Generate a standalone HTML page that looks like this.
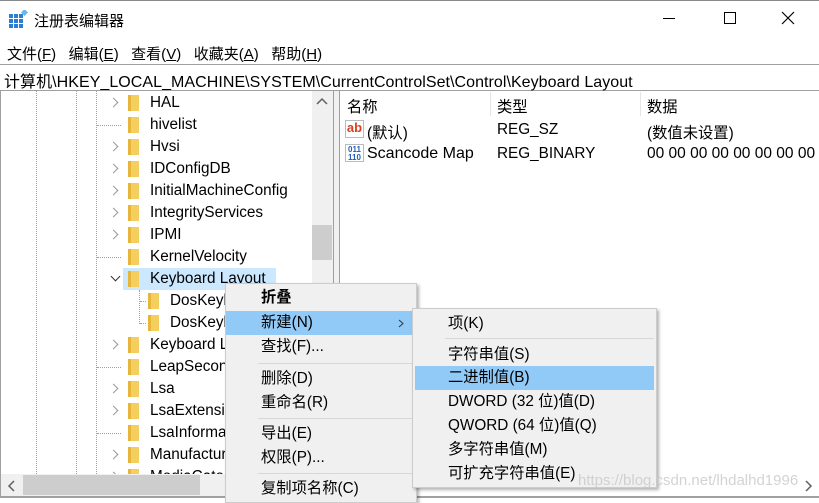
<!DOCTYPE html>
<html><head><meta charset="utf-8"><style>
*{margin:0;padding:0;box-sizing:border-box}
body{width:819px;height:498px;overflow:hidden;background:#fff;font-family:"Liberation Sans","Noto Sans CJK SC",sans-serif;font-size:15.3px;color:#000;position:relative}
.a{position:absolute;white-space:nowrap}
.fold{position:absolute;width:11px;height:16px;background:#f5cf5e;border-left:3px solid #e6b53a}
.chev{position:absolute;width:7px;height:7px;border-right:1.5px solid #999;border-bottom:1.5px solid #999}
.mi{position:absolute;left:0;right:0;height:24px;line-height:24px}
.sep{position:absolute;height:1px;background:#d7d7d7}
</style></head><body>
<div class="a" style="top:0;left:0;width:819px;height:1px;background:#888"></div>
<svg class="a" style="left:9px;top:10px" width="19" height="18"><g fill="#2a7fd4"><rect x="0" y="4" width="4" height="4"/><rect x="5" y="4" width="4" height="4"/><rect x="10" y="4" width="4" height="4"/><rect x="0" y="9" width="4" height="4"/><rect x="5" y="9" width="4" height="4"/><rect x="10" y="9" width="4" height="4"/><rect x="0" y="14" width="4" height="4"/><rect x="5" y="14" width="4" height="4"/><rect x="10" y="14" width="4" height="4"/></g><rect x="13" y="0" width="5" height="5" fill="#6cb6ee" transform="rotate(45 15.5 2.5)"/></svg>
<div class="a" style="left:34px;top:10px;font-size:15px">注册表编辑器</div>
<div class="a" style="left:663px;top:18px;width:12px;height:1px;background:#000"></div>
<div class="a" style="left:724px;top:12px;width:12px;height:12px;border:1px solid #000"></div>
<svg class="a" style="left:781px;top:11px" width="14" height="14"><path d="M1 1L13 13M13 1L1 13" stroke="#000" stroke-width="1.2"/></svg>
<div class="a" style="left:7px;top:43px;font-size:15px">文件(<u>F</u>)&nbsp;&nbsp;&nbsp;编辑(<u>E</u>)&nbsp;&nbsp;&nbsp;查看(<u>V</u>)&nbsp;&nbsp;&nbsp;收藏夹(<u>A</u>)&nbsp;&nbsp;&nbsp;帮助(<u>H</u>)</div>
<div class="a" style="left:0;top:64px;width:819px;height:27px;border-top:1px solid #a0a0a0;border-bottom:1px solid #a0a0a0;background:#fff"></div>
<div class="a" style="left:4px;top:68px;font-size:16px;letter-spacing:0.05px">计算机\HKEY_LOCAL_MACHINE\SYSTEM\CurrentControlSet\Control\Keyboard Layout</div>
<div class="a" style="left:0;top:91px;width:1px;height:407px;background:#a0a0a0"></div>
<div class="a" style="left:36px;top:91px;height:385px;border-left:1px dotted #a0a0a0"></div>
<div class="a" style="left:76px;top:91px;height:385px;border-left:1px dotted #a0a0a0"></div>
<div class="a" style="left:96px;top:91px;height:385px;border-left:1px dotted #a0a0a0"></div>
<div class="a" style="left:123px;top:268px;width:153px;height:22px;background:#cce8ff"></div>
<div class="a" style="left:139px;top:290px;height:34px;border-left:1px dotted #a0a0a0"></div>
<div id="tree"></div>
<div class="a" style="left:312px;top:91px;width:21px;height:383px;background:#f0f0f0"></div>
<svg class="a" style="left:316px;top:97px" width="12" height="8"><path d="M1 7L6 2L11 7" stroke="#606060" stroke-width="1.5" fill="none"/></svg>
<div class="a" style="left:312px;top:225px;width:20px;height:35px;background:#cdcdcd"></div>
<div class="a" style="left:1px;top:474px;width:332px;height:22px;background:#f0f0f0"></div>
<svg class="a" style="left:7px;top:480px" width="8" height="12"><path d="M7 1L2 6L7 11" stroke="#606060" stroke-width="1.5" fill="none"/></svg>
<div class="a" style="left:23px;top:475px;width:177px;height:20px;background:#cdcdcd"></div>
<div class="a" style="left:0;top:496px;width:819px;height:2px;background:#a0a0a0"></div>
<div class="a" style="left:333px;top:91px;width:1px;height:407px;background:#a0a0a0"></div>
<div class="a" style="left:339px;top:91px;width:1px;height:407px;background:#a0a0a0"></div>
<div class="a" style="left:334px;top:91px;width:5px;height:407px;background:#f0f0f0"></div>
<div class="a" style="left:347px;top:95px">名称</div>
<div class="a" style="left:490px;top:92px;width:1px;height:24px;background:#e5e5e5"></div>
<div class="a" style="left:497px;top:95px">类型</div>
<div class="a" style="left:640px;top:92px;width:1px;height:24px;background:#e5e5e5"></div>
<div class="a" style="left:647px;top:95px">数据</div>
<div class="a" style="left:345px;top:120px;width:19px;height:18px;border:1px solid #bbb;background:#fff;color:#d3431f;font-weight:bold;font-size:13px;line-height:14px;text-align:center">ab</div>
<div class="a" style="left:367px;top:121px">(默认)</div>
<div class="a" style="left:497px;top:121px">REG_SZ</div>
<div class="a" style="left:647px;top:121px">(数值未设置)</div>
<div class="a" style="left:345px;top:144px;width:19px;height:18px;border:1px solid #bbb;background:#fff;color:#1d5fb8;font-weight:bold;font-size:8px;line-height:8px;text-align:center;padding-top:1px">011<br>110</div>
<div class="a" style="left:367px;top:145px;font-size:16px">Scancode Map</div>
<div class="a" style="left:497px;top:145px">REG_BINARY</div>
<div class="a" style="left:647px;top:145px;font-size:15.5px">00 00 00 00 00 00 00 00</div>
<div class="a" style="left:225px;top:283px;width:192px;height:220px;background:#f0f0f0;border:1px solid #ccc;box-shadow:2px 2px 3px rgba(0,0,0,.3)">
 <div class="mi" style="top:2px;padding-left:35px;font-weight:bold">折叠</div>
 <div class="mi" style="top:27px;padding-left:35px;background:#91c9f7">新建(N)<svg style="position:absolute;left:172px;top:8px" width="6" height="9"><path d="M1 1L5 4.5L1 8" stroke="#333" fill="none"/></svg></div>
 <div class="mi" style="top:51px;padding-left:35px">查找(F)...</div>
 <div class="sep" style="top:79px;left:32px;right:2px"></div>
 <div class="mi" style="top:83px;padding-left:35px">删除(D)</div>
 <div class="mi" style="top:107px;padding-left:35px">重命名(R)</div>
 <div class="sep" style="top:134px;left:32px;right:2px"></div>
 <div class="mi" style="top:138px;padding-left:35px">导出(E)</div>
 <div class="mi" style="top:162px;padding-left:35px">权限(P)...</div>
 <div class="sep" style="top:189px;left:32px;right:2px"></div>
 <div class="mi" style="top:193px;padding-left:35px">复制项名称(C)</div>
</div>
<div class="a" style="left:412px;top:308px;width:245px;height:180px;background:#f0f0f0;border:1px solid #ccc;box-shadow:2px 2px 3px rgba(0,0,0,.3)">
 <div class="mi" style="top:3px;padding-left:35px">项(K)</div>
 <div class="sep" style="top:29px;left:32px;right:2px"></div>
 <div class="mi" style="top:34px;padding-left:35px">字符串值(S)</div>
 <div class="mi" style="top:57px;left:2px;right:2px;padding-left:33px;background:#91c9f7">二进制值(B)</div>
 <div class="mi" style="top:81px;padding-left:35px">DWORD (32 位)值(D)</div>
 <div class="mi" style="top:105px;padding-left:35px">QWORD (64 位)值(Q)</div>
 <div class="mi" style="top:129px;padding-left:35px">多字符串值(M)</div>
 <div class="mi" style="top:153px;padding-left:35px">可扩充字符串值(E)</div>
</div>
<div class="a" style="left:578px;top:472px;color:rgba(200,200,200,.8);font-size:15px">https://blog.csdn.net/lhdalhd1996</div>
<svg class="a" style="left:805px;top:480px" width="8" height="12"><path d="M1 1L6 6L1 11" stroke="#606060" stroke-width="1.5" fill="none"/></svg>
<script>
var items=[["HAL",1],["hivelist",0],["Hvsi",1],["IDConfigDB",1],["InitialMachineConfig",1],["IntegrityServices",1],["IPMI",1],["KernelVelocity",0],["Keyboard Layout",2],["DosKeybCodes",3],["DosKeybIDs",3],["Keyboard Layouts",1],["LeapSecondInformation",0],["Lsa",1],["LsaExtensionConfig",1],["LsaInformation",0],["Manufacturing",1],["MediaCategories",1]];
var h="";items.forEach(function(it,i){var y=92+i*22;var fx=it[1]==3?148:128;var tx=it[1]==3?170:150;
if(it[1]==1)h+='<div class="chev" style="left:110px;top:'+(y+7)+'px;transform:rotate(-45deg)"></div>';
if(it[1]==2)h+='<div class="chev" style="left:112px;top:'+(y+5)+'px;transform:rotate(45deg);border-color:#333"></div>';
if(it[1]==0)h+='<div class="a" style="left:97px;top:'+(y+11)+'px;width:24px;border-top:1px dotted #a0a0a0"></div>';
if(it[1]==3)h+='<div class="a" style="left:140px;top:'+(y+11)+'px;width:6px;border-top:1px dotted #a0a0a0"></div>';
h+='<div class="fold" style="left:'+fx+'px;top:'+(y+3)+'px"></div><div class="a" style="left:'+tx+'px;top:'+(y+2)+'px">'+it[0]+'</div>';});
document.getElementById("tree").innerHTML=h;
</script>
</body></html>
